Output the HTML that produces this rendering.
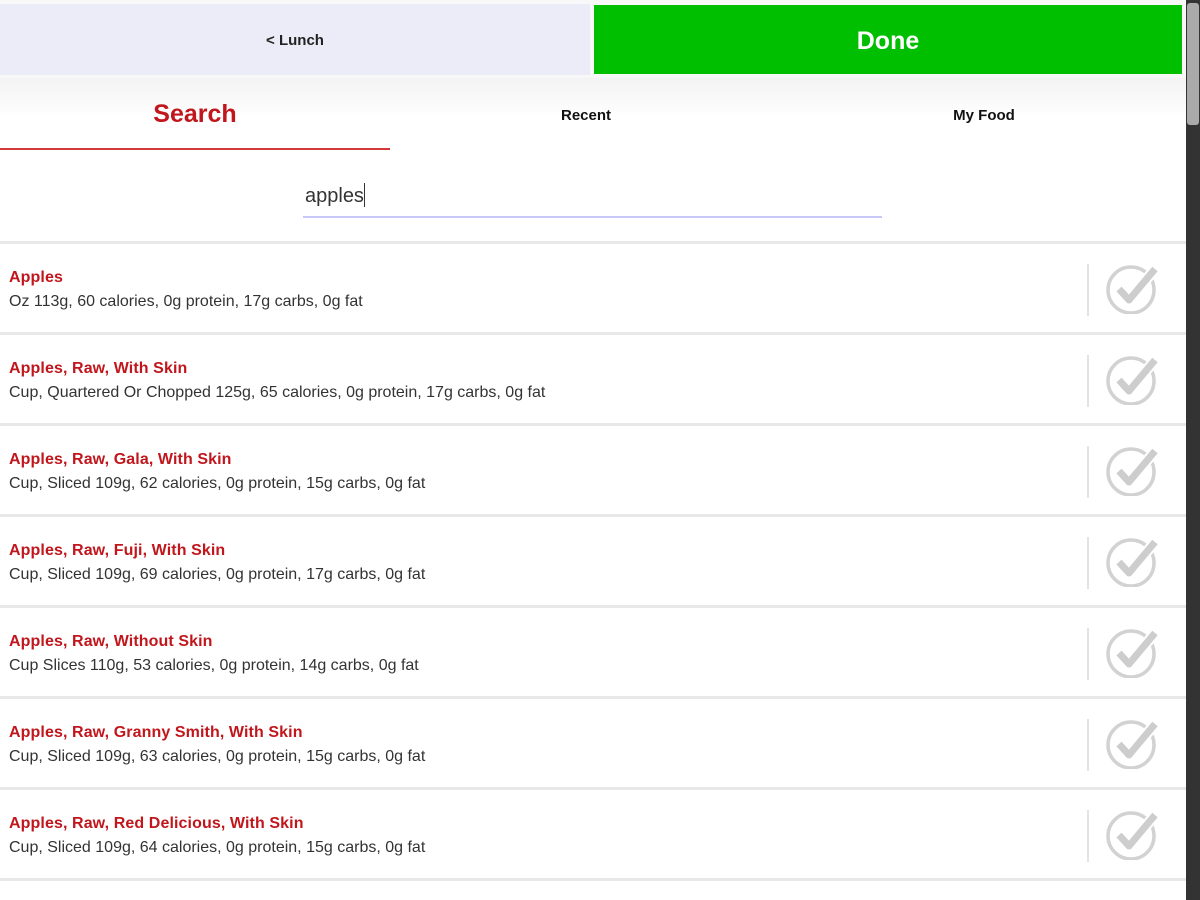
<!DOCTYPE html>
<html><head><style>
*{margin:0;padding:0;box-sizing:border-box}
html,body{width:1200px;height:900px;overflow:hidden}
body{background:#fff;font-family:"Liberation Sans",sans-serif;position:relative}
.abs{position:absolute}
.row{position:absolute;left:0;width:1186px;height:91px;border-top:3px solid #e8e8e8}
.t{position:absolute;left:9px;top:25px;color:#c0161c;font-size:16px;font-weight:bold;letter-spacing:0.1px}
.d{position:absolute;left:9px;top:49px;color:#333;font-size:16px}
.v{position:absolute;left:1087px;top:20px;width:2px;height:52px;background:#e3e3e3}
.c{position:absolute;left:1104px;top:18px}
</style></head><body>
<div class="abs" style="left:0;top:0;width:1186px;height:80px;background:#f8f8f8"></div>
<div class="abs" style="left:0;top:4px;width:590px;height:71px;background:#ececf8;text-align:center;line-height:74px;font-size:15px;font-weight:bold;color:#222">&lt; Lunch</div>
<div class="abs" style="left:594px;top:5px;width:588px;height:69px;background:#00bf00;text-align:center;line-height:72px;font-size:25px;font-weight:bold;color:#fff">Done</div>
<div class="abs" style="left:0;top:78px;width:1186px;height:40px;background:linear-gradient(#f3f3f3,#fff)"></div>
<div class="abs" style="left:0;top:100px;width:390px;text-align:center;font-size:25px;font-weight:bold;color:#c0161c">Search</div>
<div class="abs" style="left:0;top:148px;width:390px;height:2px;background:#d23a3a"></div>
<div class="abs" style="left:390px;top:107px;width:392px;text-align:center;font-size:15px;font-weight:bold;color:#111">Recent</div>
<div class="abs" style="left:782px;top:107px;width:404px;text-align:center;font-size:15px;font-weight:bold;color:#111">My Food</div>
<div class="abs" style="left:305px;top:183px;font-size:20px;color:#333">apples<span style="display:inline-block;width:1px;height:24px;background:#333;vertical-align:-5px"></span></div>
<div class="abs" style="left:303px;top:216px;width:579px;height:2px;background:#c8c8f8"></div>

<div class="row" style="top:241px"><div class="t">Apples</div><div class="d">Oz 113g, 60 calories, 0g protein, 17g carbs, 0g fat</div><div class="v"></div><svg class="c" width="56" height="52" viewBox="0 0 56 52"><circle cx="27" cy="28" r="23" fill="none" stroke="#d2d2d2" stroke-width="3.5"/><path d="M15 27 L25 38 L51 7" fill="none" stroke="#fff" stroke-width="11" stroke-linejoin="round"/><path d="M15 27 L25 38 L51 7" fill="none" stroke="#cdcdcd" stroke-width="7" stroke-linejoin="round"/></svg></div>
<div class="row" style="top:332px"><div class="t">Apples, Raw, With Skin</div><div class="d">Cup, Quartered Or Chopped 125g, 65 calories, 0g protein, 17g carbs, 0g fat</div><div class="v"></div><svg class="c" width="56" height="52" viewBox="0 0 56 52"><circle cx="27" cy="28" r="23" fill="none" stroke="#d2d2d2" stroke-width="3.5"/><path d="M15 27 L25 38 L51 7" fill="none" stroke="#fff" stroke-width="11" stroke-linejoin="round"/><path d="M15 27 L25 38 L51 7" fill="none" stroke="#cdcdcd" stroke-width="7" stroke-linejoin="round"/></svg></div>
<div class="row" style="top:423px"><div class="t">Apples, Raw, Gala, With Skin</div><div class="d">Cup, Sliced 109g, 62 calories, 0g protein, 15g carbs, 0g fat</div><div class="v"></div><svg class="c" width="56" height="52" viewBox="0 0 56 52"><circle cx="27" cy="28" r="23" fill="none" stroke="#d2d2d2" stroke-width="3.5"/><path d="M15 27 L25 38 L51 7" fill="none" stroke="#fff" stroke-width="11" stroke-linejoin="round"/><path d="M15 27 L25 38 L51 7" fill="none" stroke="#cdcdcd" stroke-width="7" stroke-linejoin="round"/></svg></div>
<div class="row" style="top:514px"><div class="t">Apples, Raw, Fuji, With Skin</div><div class="d">Cup, Sliced 109g, 69 calories, 0g protein, 17g carbs, 0g fat</div><div class="v"></div><svg class="c" width="56" height="52" viewBox="0 0 56 52"><circle cx="27" cy="28" r="23" fill="none" stroke="#d2d2d2" stroke-width="3.5"/><path d="M15 27 L25 38 L51 7" fill="none" stroke="#fff" stroke-width="11" stroke-linejoin="round"/><path d="M15 27 L25 38 L51 7" fill="none" stroke="#cdcdcd" stroke-width="7" stroke-linejoin="round"/></svg></div>
<div class="row" style="top:605px"><div class="t">Apples, Raw, Without Skin</div><div class="d">Cup Slices 110g, 53 calories, 0g protein, 14g carbs, 0g fat</div><div class="v"></div><svg class="c" width="56" height="52" viewBox="0 0 56 52"><circle cx="27" cy="28" r="23" fill="none" stroke="#d2d2d2" stroke-width="3.5"/><path d="M15 27 L25 38 L51 7" fill="none" stroke="#fff" stroke-width="11" stroke-linejoin="round"/><path d="M15 27 L25 38 L51 7" fill="none" stroke="#cdcdcd" stroke-width="7" stroke-linejoin="round"/></svg></div>
<div class="row" style="top:696px"><div class="t">Apples, Raw, Granny Smith, With Skin</div><div class="d">Cup, Sliced 109g, 63 calories, 0g protein, 15g carbs, 0g fat</div><div class="v"></div><svg class="c" width="56" height="52" viewBox="0 0 56 52"><circle cx="27" cy="28" r="23" fill="none" stroke="#d2d2d2" stroke-width="3.5"/><path d="M15 27 L25 38 L51 7" fill="none" stroke="#fff" stroke-width="11" stroke-linejoin="round"/><path d="M15 27 L25 38 L51 7" fill="none" stroke="#cdcdcd" stroke-width="7" stroke-linejoin="round"/></svg></div>
<div class="row" style="top:787px"><div class="t">Apples, Raw, Red Delicious, With Skin</div><div class="d">Cup, Sliced 109g, 64 calories, 0g protein, 15g carbs, 0g fat</div><div class="v"></div><svg class="c" width="56" height="52" viewBox="0 0 56 52"><circle cx="27" cy="28" r="23" fill="none" stroke="#d2d2d2" stroke-width="3.5"/><path d="M15 27 L25 38 L51 7" fill="none" stroke="#fff" stroke-width="11" stroke-linejoin="round"/><path d="M15 27 L25 38 L51 7" fill="none" stroke="#cdcdcd" stroke-width="7" stroke-linejoin="round"/></svg></div>
<div class="row" style="top:878px;height:22px"></div>

<div class="abs" style="left:1186px;top:0;width:14px;height:900px;background:#333"></div>
<div class="abs" style="left:1187px;top:3px;width:12px;height:122px;background:#aaa;border-radius:3px"></div>
</body></html>
